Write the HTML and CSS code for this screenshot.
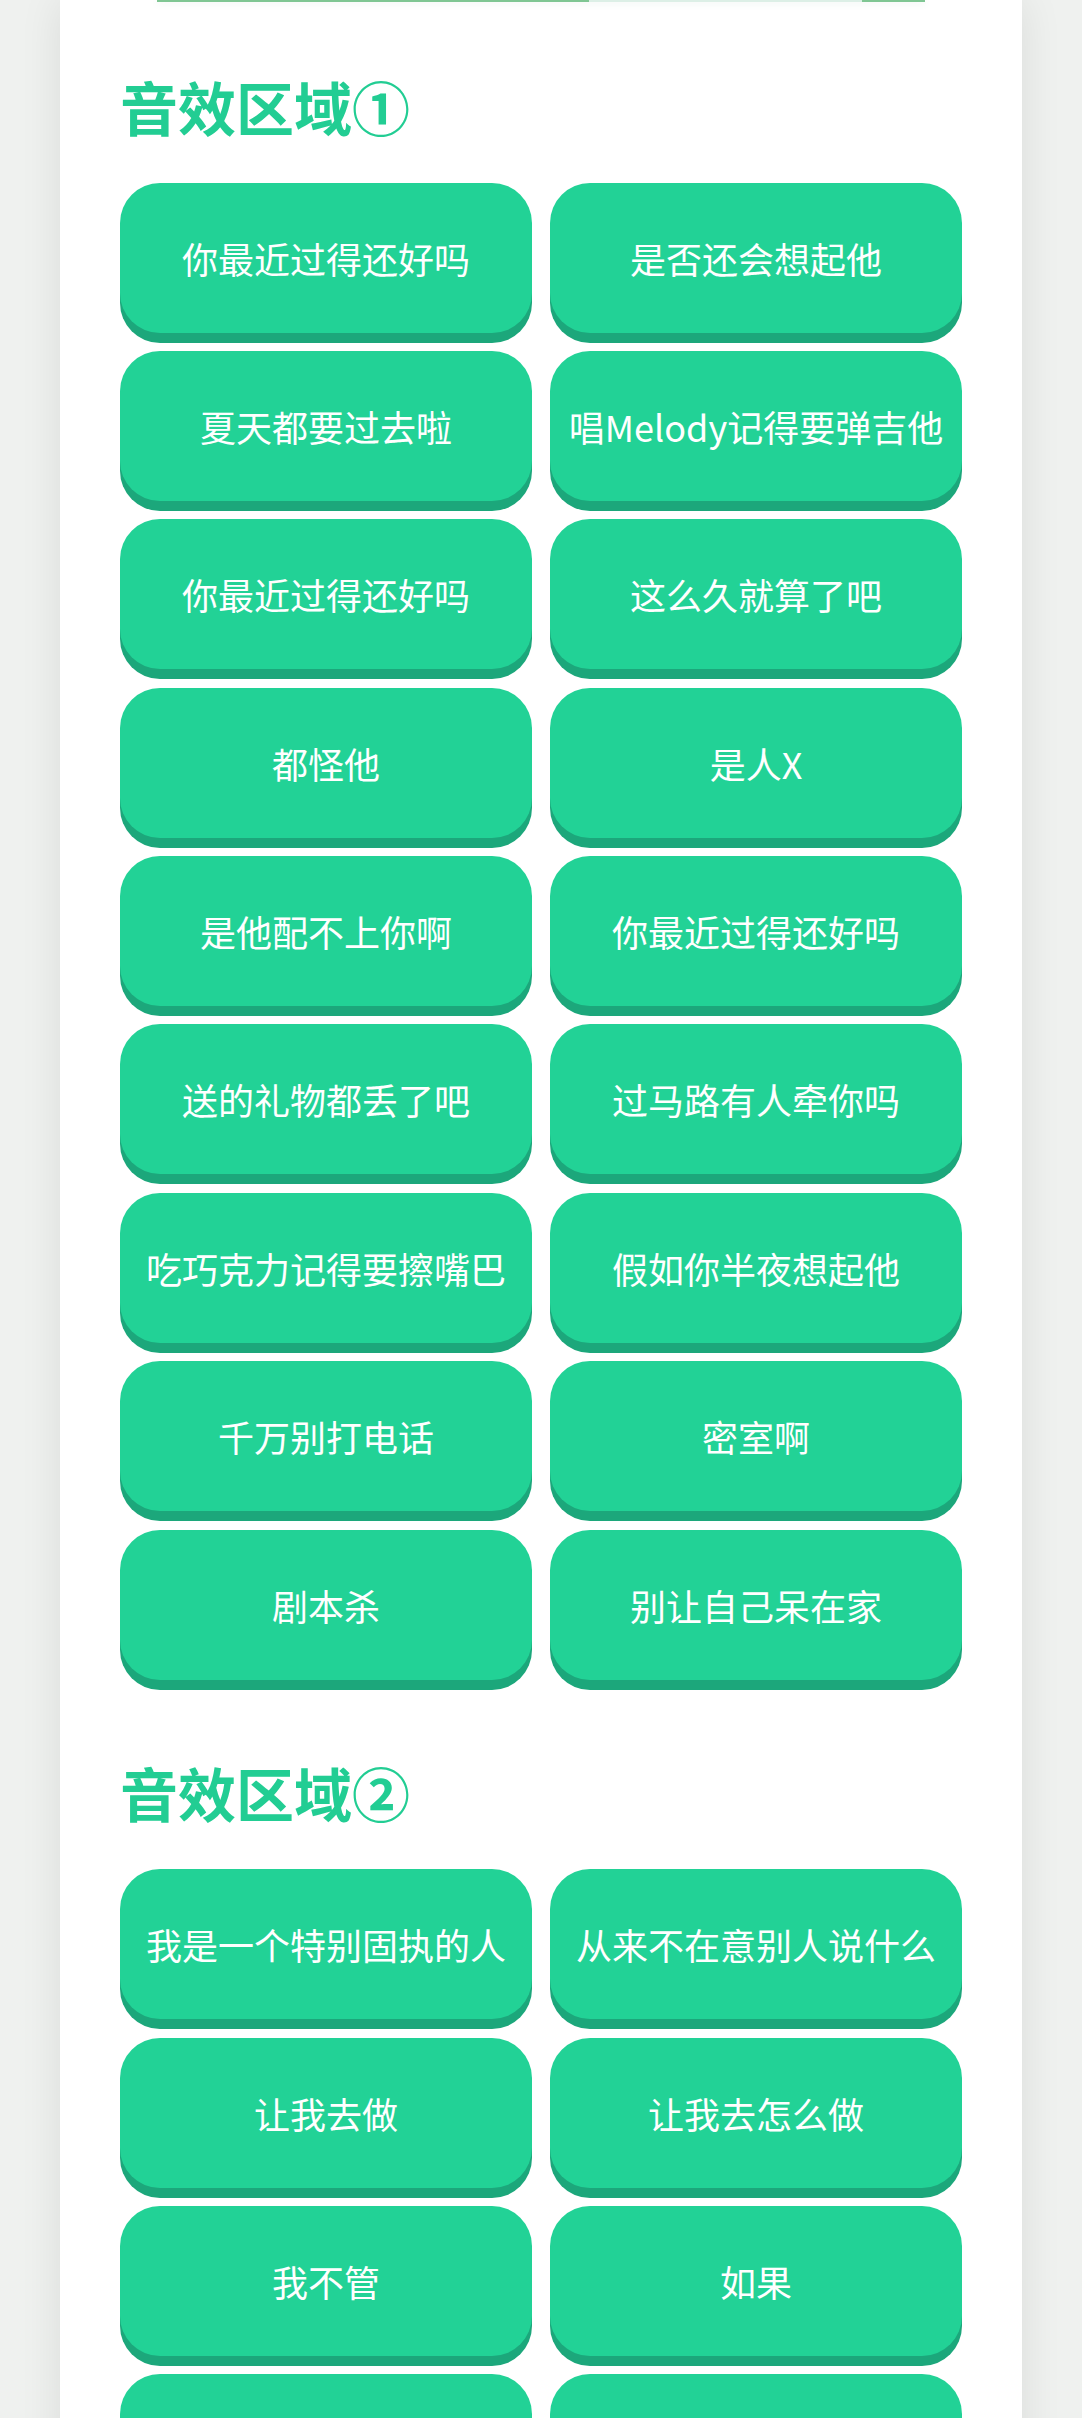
FILE: index.html
```html
<!DOCTYPE html>
<html lang="zh-CN">

<head>
    <meta charset="UTF-8">
    <meta name="viewport" content="width=device-width, initial-scale=1.0">
    <title>音效板</title>
    <link rel="stylesheet" href="styles.css">
</head>

<body>
    <div class="page">
        <div class="top-bar">
            <span class="bar-fill"></span>
            <span class="bar-rest"></span>
            <span class="bar-end"></span>
        </div>

        <section class="sound-section">
            <h2 class="section-title">音效区域①</h2>
            <div class="sound-grid">
                <button class="sound-btn">你最近过得还好吗</button>
                <button class="sound-btn">是否还会想起他</button>
                <button class="sound-btn">夏天都要过去啦</button>
                <button class="sound-btn">唱Melody记得要弹吉他</button>
                <button class="sound-btn">你最近过得还好吗</button>
                <button class="sound-btn">这么久就算了吧</button>
                <button class="sound-btn">都怪他</button>
                <button class="sound-btn">是人X</button>
                <button class="sound-btn">是他配不上你啊</button>
                <button class="sound-btn">你最近过得还好吗</button>
                <button class="sound-btn">送的礼物都丢了吧</button>
                <button class="sound-btn">过马路有人牵你吗</button>
                <button class="sound-btn">吃巧克力记得要擦嘴巴</button>
                <button class="sound-btn">假如你半夜想起他</button>
                <button class="sound-btn">千万别打电话</button>
                <button class="sound-btn">密室啊</button>
                <button class="sound-btn">剧本杀</button>
                <button class="sound-btn">别让自己呆在家</button>
            </div>
        </section>

        <section class="sound-section">
            <h2 class="section-title">音效区域②</h2>
            <div class="sound-grid">
                <button class="sound-btn">我是一个特别固执的人</button>
                <button class="sound-btn">从来不在意别人说什么</button>
                <button class="sound-btn">让我去做</button>
                <button class="sound-btn">让我去怎么做</button>
                <button class="sound-btn">我不管</button>
                <button class="sound-btn">如果</button>
                <button class="sound-btn"></button>
                <button class="sound-btn"></button>
            </div>
        </section>
    </div>
</body>

</html>
```

FILE: styles.css
```css
body {
    margin: 0;
    background-color: #eff1ef;
    font-family: "Noto Sans CJK SC", "Noto Sans", sans-serif;
}

.page {
    margin: 0 60px;
    padding: 0 60px 40px;
    min-height: 2418px;
    background-color: #ffffff;
    box-shadow: 0 0 40px rgba(0, 0, 0, 0.09);
}

.top-bar {
    display: flex;
    height: 2px;
    margin: 0 37px;
    box-shadow: 0 2px 6px rgba(90, 170, 120, 0.15);
}

.bar-fill {
    flex: 432;
    background-color: #7fc693;
}

.bar-rest {
    flex: 273;
    background-color: #dcefe6;
}

.bar-end {
    flex: 63;
    background-color: #7fc693;
}

.sound-section {
    padding-top: 68.5px;
}

.sound-section + .sound-section {
    padding-top: 77.5px;
}

.section-title {
    margin: 0 0 42px;
    font-size: 58px;
    line-height: 70px;
    font-weight: 700;
    color: #22cd93;
}

.sound-grid {
    display: grid;
    grid-template-columns: 1fr 1fr;
    column-gap: 18px;
    row-gap: 18.4px;
}

.sound-btn {
    display: flex;
    align-items: center;
    justify-content: center;
    height: 150px;
    padding: 0 8px;
    border: none;
    border-radius: 40px;
    background-color: #22d296;
    box-shadow: 0 10px 0 #1ca77b;
    color: #ffffff;
    font-family: "Noto Sans CJK SC", "Noto Sans", sans-serif;
    font-size: 36px;
    font-weight: 400;
    white-space: nowrap;
}
```
